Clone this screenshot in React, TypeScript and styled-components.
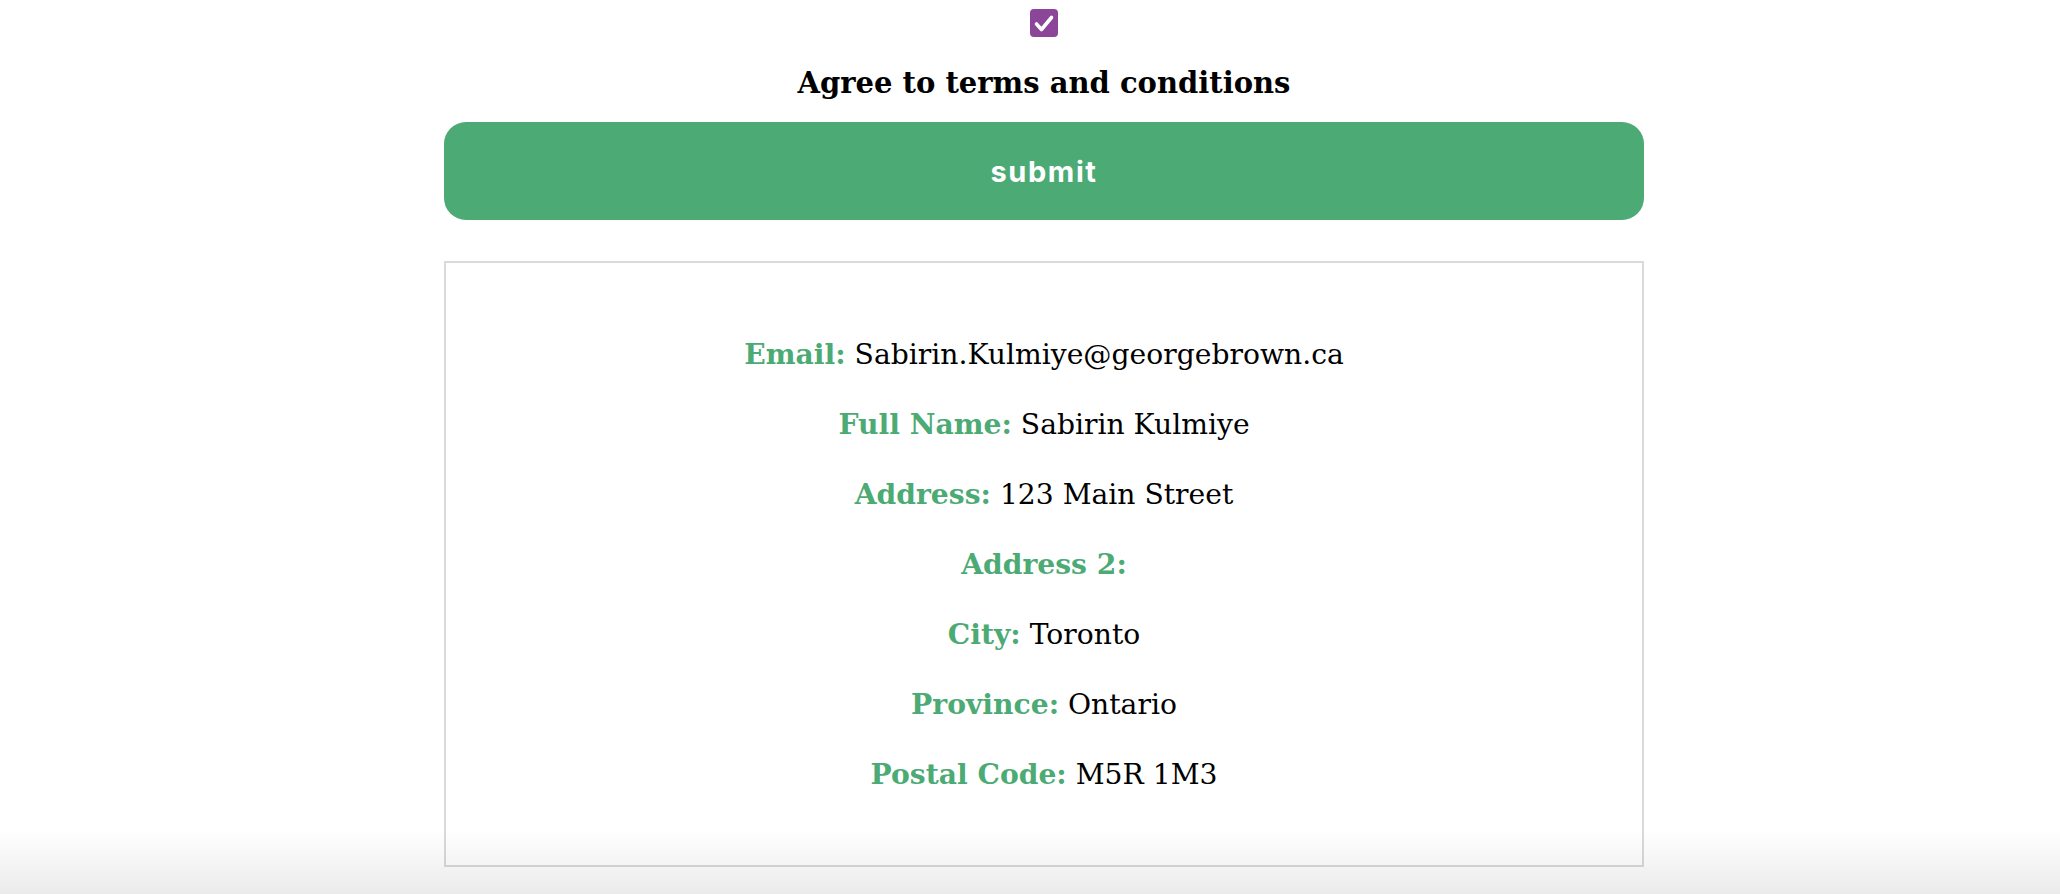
import styled, { createGlobalStyle } from 'styled-components'

const GlobalStyle = createGlobalStyle`
  html, body {
    margin: 0;
    padding: 0;
    background: #ffffff;
  }
  body {
    font-family: "DejaVu Serif", "Liberation Serif", serif;
    color: #000;
  }
`

const green = '#4caa74'

const Page = styled.div`
  display: flex;
  flex-direction: column;
  align-items: center;
  padding: 9px 0 0 28px;
`

const Form = styled.form`
  width: 1200px;
  display: flex;
  flex-direction: column;
  align-items: center;
`

const CheckBox = styled.span`
  width: 28px;
  height: 28px;
  border-radius: 4px;
  background: #8b4599;
  display: flex;
  align-items: center;
  justify-content: center;
`

const Heading = styled.h3`
  margin: 26px 0 19px;
  font-family: "DejaVu Serif", "Liberation Serif", serif;
  font-weight: 700;
  font-size: 29px;
  line-height: 40px;
  text-align: center;
`

const SubmitButton = styled.button`
  width: 100%;
  height: 98px;
  border: none;
  border-radius: 22px;
  background: ${green};
  color: #ffffff;
  font-family: Inter, "Liberation Sans", sans-serif;
  font-weight: 700;
  font-size: 29px;
  letter-spacing: 1.6px;
  cursor: pointer;
`

const Card = styled.section`
  box-sizing: border-box;
  width: 100%;
  height: 606px;
  margin-top: 41px;
  border: 2px solid #dadada;
  padding-top: 57px;
  display: flex;
  flex-direction: column;
  align-items: center;
`

const Row = styled.p`
  margin: 0;
  font-size: 28.2px;
  line-height: 70px;
  text-align: center;
`

const Label = styled.strong`
  color: ${green};
  font-weight: 700;
`

const BottomFade = styled.div`
  position: fixed;
  left: 0;
  right: 0;
  bottom: 0;
  height: 64px;
  pointer-events: none;
  background: linear-gradient(to bottom, rgba(0, 0, 0, 0), rgba(0, 0, 0, 0.08));
`

const details: [string, string][] = [
  ['Email', 'Sabirin.Kulmiye@georgebrown.ca'],
  ['Full Name', 'Sabirin Kulmiye'],
  ['Address', '123 Main Street'],
  ['Address 2', ''],
  ['City', 'Toronto'],
  ['Province', 'Ontario'],
  ['Postal Code', 'M5R 1M3'],
]

export default function App() {
  return (
    <>
      <GlobalStyle />
      <Page>
        <Form onSubmit={e => e.preventDefault()}>
          <CheckBox role='checkbox' aria-checked='true'>
            <svg width='28' height='28' viewBox='0 0 28 28'>
              <path
                d='M6.5 15 L11.5 20.5 L21.5 8.5'
                fill='none'
                stroke='#ffffff'
                strokeWidth='3.6'
                strokeLinecap='round'
                strokeLinejoin='round'
              />
            </svg>
          </CheckBox>
          <Heading>Agree to terms and conditions</Heading>
          <SubmitButton type='submit'>submit</SubmitButton>
          <Card>
            {details.map(([label, value]) => (
              <Row key={label}>
                <Label>{label}:</Label> {value}
              </Row>
            ))}
          </Card>
        </Form>
      </Page>
      <BottomFade />
    </>
  )
}
